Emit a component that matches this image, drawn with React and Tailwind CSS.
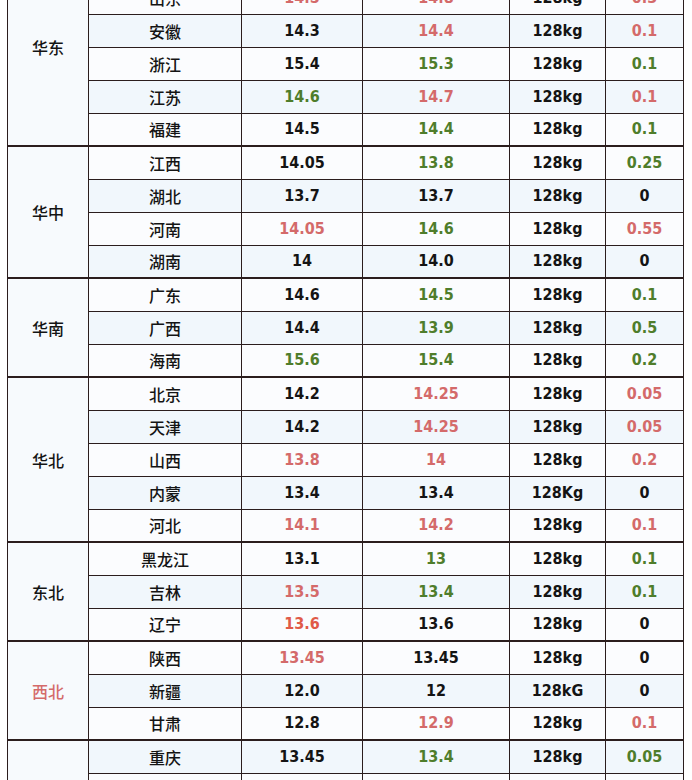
import React from "react";

const R = "text-[#d46a6a]";
const G = "text-[#4f7d2b]";
const K = "text-[#141414]";

// [province, price1, c1, price2, c2, weight, change, c3, tinted]
const groups = [
  {
    name: "华东",
    color: K,
    rows: [
      ["上海", "14.6", K, "14.7", R, "128kg", "0.1", R, false],
      ["山东", "14.5", R, "14.8", R, "128kg", "0.3", R, false],
      ["安徽", "14.3", K, "14.4", R, "128kg", "0.1", R, true],
      ["浙江", "15.4", K, "15.3", G, "128kg", "0.1", G, false],
      ["江苏", "14.6", G, "14.7", R, "128kg", "0.1", R, true],
      ["福建", "14.5", K, "14.4", G, "128kg", "0.1", G, false],
    ],
  },
  {
    name: "华中",
    color: K,
    rows: [
      ["江西", "14.05", K, "13.8", G, "128kg", "0.25", G, false],
      ["湖北", "13.7", K, "13.7", K, "128kg", "0", K, true],
      ["河南", "14.05", R, "14.6", G, "128kg", "0.55", R, false],
      ["湖南", "14", K, "14.0", K, "128kg", "0", K, true],
    ],
  },
  {
    name: "华南",
    color: K,
    rows: [
      ["广东", "14.6", K, "14.5", G, "128kg", "0.1", G, false],
      ["广西", "14.4", K, "13.9", G, "128kg", "0.5", G, true],
      ["海南", "15.6", G, "15.4", G, "128kg", "0.2", G, false],
    ],
  },
  {
    name: "华北",
    color: K,
    rows: [
      ["北京", "14.2", K, "14.25", R, "128kg", "0.05", R, false],
      ["天津", "14.2", K, "14.25", R, "128kg", "0.05", R, true],
      ["山西", "13.8", R, "14", R, "128kg", "0.2", R, false],
      ["内蒙", "13.4", K, "13.4", K, "128Kg", "0", K, true],
      ["河北", "14.1", R, "14.2", R, "128kg", "0.1", R, false],
    ],
  },
  {
    name: "东北",
    color: K,
    rows: [
      ["黑龙江", "13.1", K, "13", G, "128kg", "0.1", G, false],
      ["吉林", "13.5", R, "13.4", G, "128kg", "0.1", G, true],
      ["辽宁", "13.6", "text-[#e05a48]", "13.6", K, "128kg", "0", K, false],
    ],
  },
  {
    name: "西北",
    color: R,
    rows: [
      ["陕西", "13.45", R, "13.45", K, "128kg", "0", K, false],
      ["新疆", "12.0", K, "12", K, "128kG", "0", K, true],
      ["甘肃", "12.8", K, "12.9", R, "128kg", "0.1", R, false],
    ],
  },
  {
    name: "西南",
    color: K,
    rows: [
      ["重庆", "13.45", K, "13.4", G, "128kg", "0.05", G, true],
      ["四川", "13.5", K, "13.5", K, "128kg", "0", K, false],
      ["贵州", "13.6", K, "13.6", K, "128kg", "0", K, true],
      ["云南", "13.4", K, "13.4", K, "128kg", "0", K, false],
    ],
  },
];

const cell = "border border-[#2b1d1d] text-center align-middle p-0";
const num = "font-bold text-[16px] [font-family:'DejaVu_Sans_Condensed','DejaVu_Sans',sans-serif]";

export default function App() {
  return (
    <div className="h-[780px] w-[692px] overflow-hidden bg-white [font-family:'Noto_Sans_CJK_SC',sans-serif]">
      <table className="-mt-[53px] ml-[7px] w-[676px] table-fixed border-collapse text-[16px] text-[#141414]">
        <colgroup>
          <col className="w-[81px]" />
          <col className="w-[153px]" />
          <col className="w-[121px]" />
          <col className="w-[147px]" />
          <col className="w-[96px]" />
          <col className="w-[78px]" />
        </colgroup>
        <tbody>
          {groups.map((g) =>
            g.rows.map((r, i) => {
              const top = i === 0 ? "border-t-2" : "";
              const bg = r[8] ? "bg-[#f1f7fc]" : "bg-[#fbfcfe]";
              return (
                <tr key={g.name + r[0]} className="h-[33px]">
                  {i === 0 && (
                    <td rowSpan={g.rows.length} className={`${cell} border-t-2 bg-[#f7fafd] font-medium ${g.color}`}>
                      {g.name}
                    </td>
                  )}
                  <td className={`${cell} ${top} ${bg} font-medium`}>{r[0]}</td>
                  <td className={`${cell} ${top} ${bg} ${num} ${r[2]}`}>{r[1]}</td>
                  <td className={`${cell} ${top} ${bg} ${num} ${r[4]}`}>{r[3]}</td>
                  <td className={`${cell} ${top} ${bg} ${num} text-[#141414]`}>{r[5]}</td>
                  <td className={`${cell} ${top} ${bg} ${num} ${r[7]}`}>{r[6]}</td>
                </tr>
              );
            })
          )}
        </tbody>
      </table>
    </div>
  );
}
